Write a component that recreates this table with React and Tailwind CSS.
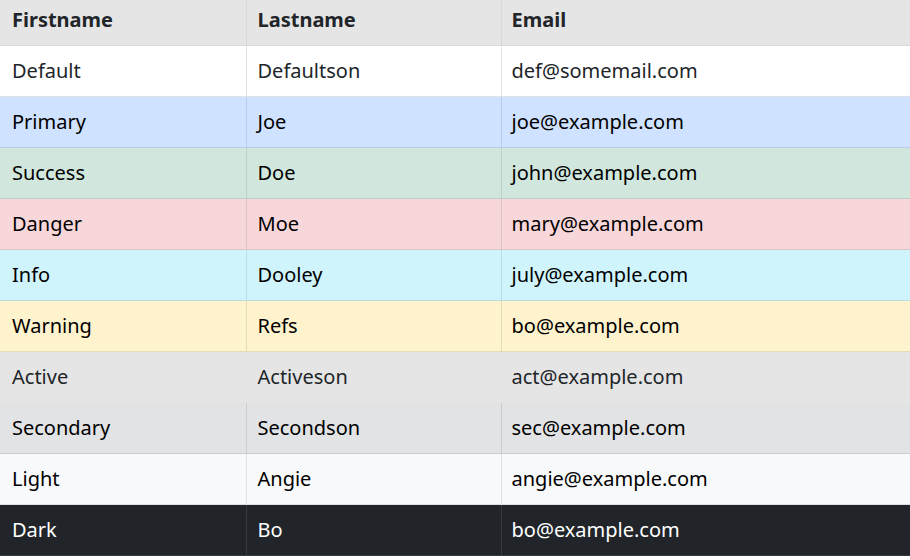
const rows = [
  { first: 'Default', last: 'Defaultson', email: 'def@somemail.com', row: 'bg-white text-[#212529]', cell: 'border-[#dee2e6]' },
  { first: 'Primary', last: 'Joe', email: 'joe@example.com', row: 'bg-[#cfe2ff] text-black', cell: 'border-[#bacbe6]' },
  { first: 'Success', last: 'Doe', email: 'john@example.com', row: 'bg-[#d1e7dd] text-black', cell: 'border-[#bcd0c7]' },
  { first: 'Danger', last: 'Moe', email: 'mary@example.com', row: 'bg-[#f8d7da] text-black', cell: 'border-[#dfc2c4]' },
  { first: 'Info', last: 'Dooley', email: 'july@example.com', row: 'bg-[#cff4fc] text-black', cell: 'border-[#badce3]' },
  { first: 'Warning', last: 'Refs', email: 'bo@example.com', row: 'bg-[#fff3cd] text-black', cell: 'border-[#e6dbb9]' },
  { first: 'Active', last: 'Activeson', email: 'act@example.com', row: 'bg-[#e5e5e5] text-[#212529]', cell: 'border-[#e5e5e5]' },
  { first: 'Secondary', last: 'Secondson', email: 'sec@example.com', row: 'bg-[#e2e3e5] text-black', cell: 'border-[#cbccce]' },
  { first: 'Light', last: 'Angie', email: 'angie@example.com', row: 'bg-[#f8f9fa] text-black', cell: 'border-[#dfe0e1]' },
  { first: 'Dark', last: 'Bo', email: 'bo@example.com', row: 'bg-[#212529] text-white', cell: 'border-[#373b3e]' },
]

export default function App() {
  return (
    <div className="w-[910px] h-[560px] overflow-hidden bg-white font-['Noto_Sans',sans-serif] text-[20px] leading-[30px]">
      <table className="w-full border-collapse table-fixed">
        <colgroup>
          <col className="w-[246px]" />
          <col className="w-[255px]" />
          <col />
        </colgroup>
        <thead>
          <tr className="bg-[#e5e5e5] text-[#212529]">
            <th className="text-left font-bold pl-3 pt-[5px] pb-[10px] border-b border-[#d9d9d9]">Firstname</th>
            <th className="text-left font-bold pl-[11px] pt-[5px] pb-[10px] border-b border-l border-[#d9d9d9]">Lastname</th>
            <th className="text-left font-bold pl-[10px] pt-[5px] pb-[10px] border-b border-l border-[#d9d9d9]">Email</th>
          </tr>
        </thead>
        <tbody>
          {rows.map((r) => (
            <tr key={r.first} className={r.row}>
              <td className={`pl-3 py-[10px] border-b ${r.cell}`}>{r.first}</td>
              <td className={`pl-[11px] py-[10px] border-b border-l ${r.cell}`}>{r.last}</td>
              <td className={`pl-[10px] py-[10px] border-b border-l ${r.cell}`}>{r.email}</td>
            </tr>
          ))}
        </tbody>
      </table>
    </div>
  )
}
